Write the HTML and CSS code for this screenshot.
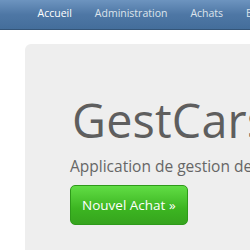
FILE: index.html
```html
<!DOCTYPE html>
<html lang="fr">
<head>
  <meta charset="UTF-8" />
  <meta name="viewport" content="width=device-width, initial-scale=1.0"/>
  <title>GestCars</title>
  <link rel="stylesheet" href="styles.css">
</head>
<body>
  <nav class="navbar">
    <ul class="nav">
      <li><a href="#" class="active">Accueil</a></li>
      <li><a href="#">Administration</a></li>
      <li><a href="#">Achats</a></li>
      <li><a href="#">Bilan</a></li>
    </ul>
  </nav>

  <div class="container">
    <div class="jumbotron">
      <h1>GestCars</h1>
      <p>Application de gestion de voitures</p>
      <a href="#" class="btn btn-success">Nouvel Achat &raquo;</a>
    </div>
  </div>
</body>
</html>
```

FILE: styles.css
```css
* { margin: 0; padding: 0; box-sizing: border-box; font-family: 'Open Sans', sans-serif; }

body {
  width: 600px;
  background: #fff;
}

.navbar {
  height: 30px;
  background: linear-gradient(#6d94bf, #4e77a5 50%, #446e9b);
  border-bottom: 1px solid #345578;
  padding-left: 26px;
}

.nav {
  display: flex;
  list-style: none;
  height: 100%;
}

.nav a {
  display: block;
  padding: 0 11.5px;
  line-height: 26px;
  font-size: 10.5px;
  color: #dde4ec;
  text-decoration: none;
}

.nav a.active {
  color: #fff;
}

.container {
  padding: 14px 0 0 25px;
}

.jumbotron {
  background: #eeeeee;
  border-radius: 6px;
  padding: 51px 44px 40px 45px;
}

.jumbotron h1 {
  font-size: 46.7px;
  font-weight: 400;
  line-height: 1.1;
  color: #5e5e5e;
  margin-left: 2px;
  letter-spacing: 0.2px;
}

.jumbotron p {
  font-size: 15.5px;
  color: #666;
  margin: 9px 0 8px;
}

.btn {
  display: inline-block;
  padding: 0 11px;
  line-height: 38px;
  font-size: 13.5px;
  border-radius: 5px;
  text-decoration: none;
}

.btn-success {
  color: #fff;
  background: linear-gradient(#61dd45, #3cb521 60%, #36a41e);
  border: 1px solid #2e9a1a;
}
```
